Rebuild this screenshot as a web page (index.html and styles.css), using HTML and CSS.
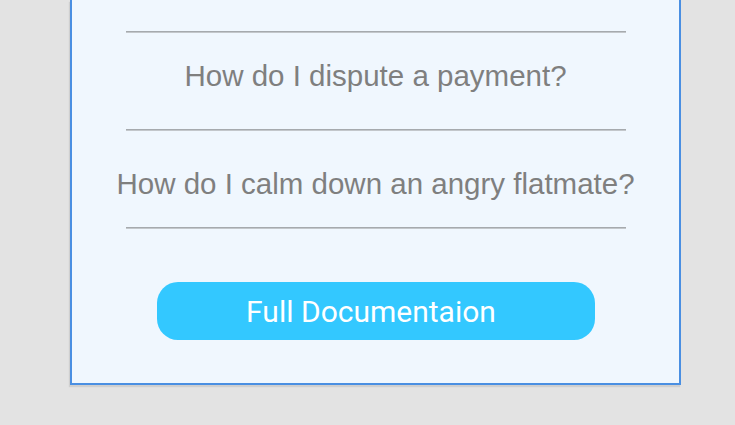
FILE: index.html
```html
<!DOCTYPE html>
<html>
<head>
<meta charset="utf-8">
<link rel="stylesheet" href="styles.css">
</head>
<body>
<div class="panel">
  <div class="faq">
    <div class="rule"></div>
    <p class="q q-first">How do I dispute a payment?</p>
    <div class="rule"></div>
    <p class="q q-last">How do I calm down an angry flatmate?</p>
    <div class="rule"></div>
  </div>
  <button class="docs">Full Documentaion</button>
</div>
</body>
</html>
```
FILE: styles.css
```css
html, body {
  margin: 0;
  padding: 0;
  background: #e3e3e3;
}
body {
  height: 425px;
  overflow: hidden;
}
.panel {
  box-sizing: border-box;
  width: 611px;
  margin-left: 70px;
  background: #f0f7fe;
  border: 2px solid #4a8fe2;
  border-top: 0;
  box-shadow: -1px 2px 1px #cfcfcf;
  padding: 31px 0 43px;
  display: flex;
  flex-direction: column;
  align-items: center;
}
.faq {
  width: 500px;
  display: flex;
  flex-direction: column;
  align-items: center;
}
.rule {
  align-self: stretch;
  height: 2px;
  background: linear-gradient(#a6aaae 50%, #c3c7cb 50%);
}
.q {
  margin: 0;
  font-family: "Liberation Sans", Arial, sans-serif;
  font-size: 29.5px;
  line-height: 34px;
  color: #7f7f7f;
  text-align: center;
  white-space: nowrap;
}
.q-first {
  padding: 26px 0 36px;
}
.q-last {
  padding: 36px 0 26px;
}
.docs {
  margin-top: 53px;
  width: 438px;
  height: 58px;
  border: 0;
  border-radius: 21px;
  background: #33c8ff;
  color: #ffffff;
  font-family: Roboto, sans-serif;
  font-size: 30px;
  padding: 0 9px 0 0;
  display: flex;
  align-items: center;
  justify-content: center;
}
```
